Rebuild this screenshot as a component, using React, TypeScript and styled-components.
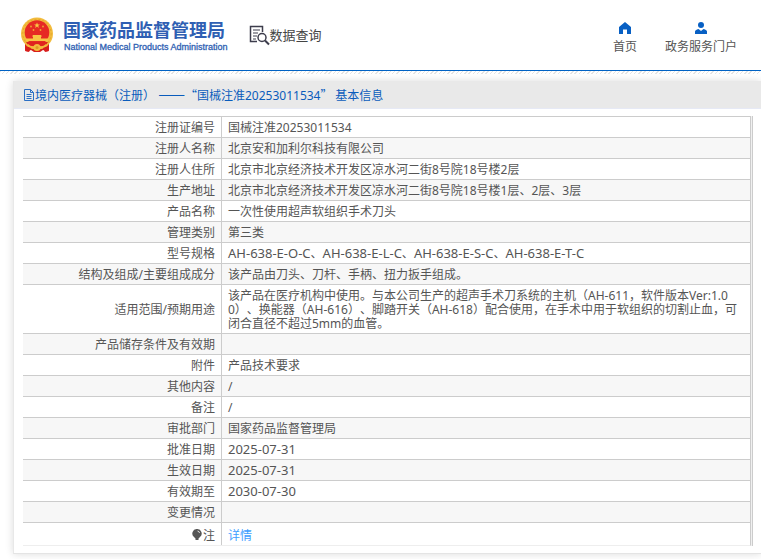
import React from 'react';
import styled, { createGlobalStyle } from 'styled-components';

const GlobalStyle = createGlobalStyle`
  * { box-sizing: border-box; }
  body {
    margin: 0;
    background: #fff;
    color: #555;
    font: 12px/14px "Noto Sans", "Noto Sans CJK SC", sans-serif;
    text-spacing-trim: space-all;
    overflow-x: hidden;
  }
`;

const Header = styled.header`
  display: flex;
  align-items: center;
  height: 71px;
  padding: 0 24px 0 21px;
  border-bottom: 1px solid #0062c4;
`;

const Brand = styled.a`
  display: flex;
  align-items: center;
  gap: 10px;
  color: #2f5fb3;
  text-decoration: none;
`;

const BrandText = styled.span`
  display: flex;
  flex-direction: column;
  gap: 1px;
  white-space: nowrap;
`;

const BrandName = styled.strong`
  font: 700 18px/22px "Noto Sans CJK SC", sans-serif;
`;

const BrandSub = styled.span`
  padding-left: 1px;
  font: 400 9px/12px "Liberation Sans", sans-serif;
  -webkit-text-stroke: 0.3px currentColor;
`;

const Query = styled.h1`
  display: flex;
  align-items: center;
  margin: 0 0 0 21px;
  color: #444;
  font: 400 13px/20px "Noto Sans CJK SC", sans-serif;
`;

const Nav = styled.nav`
  display: flex;
  gap: 28px;
  margin-left: auto;
  padding-top: 5px;
`;

const NavLink = styled.a`
  display: flex;
  flex-direction: column;
  align-items: center;
  gap: 6px;
  color: #555;
  text-decoration: none;
`;

const Hatch = styled.div`
  height: 3px;
  background: repeating-linear-gradient(135deg, #e4e4e4 0 1px, #fff 1px 3px);
`;

const Card = styled.main`
  margin: 7px 0 6px 13px;
  padding-bottom: 7px;
  border-left: 1px solid #e8e8e8;
  border-bottom: 1px solid #e4e4e4;
  box-shadow: 0 0 8px rgba(0, 0, 0, 0.14);
  background: #fff;
`;

const CardTitle = styled.h2`
  display: flex;
  align-items: center;
  height: 28px;
  margin: 0 0 7px;
  padding: 1px 9px 0;
  border-bottom: 1px solid #e6e9f5;
  background: #e9e9e9;
  color: #0a5cbc;
  font-size: 12px;
  font-weight: 400;
  white-space: pre;
`;

const Wide = styled.span`
  font-family: "Noto Sans CJK SC", sans-serif;
`;

const Dash = styled(Wide)`
  font-size: 16px;
  line-height: 12px;
`;

const TableFrame = styled.div`
  margin: 0 8px 0 9px;
  padding-right: 1px;
  border-right: 1px solid #ccc;
  background: #f0f0f0;
`;

const Table = styled.table`
  width: 100%;
  border-collapse: separate;
  border-spacing: 0;
  border-right: 1px solid #ccc;
  border-bottom: 1px solid #eee;
  background: #fff;
`;

const Row = styled.tr`
  &:nth-child(even) { background: #f7f7f7; }
  &:last-child > * { padding: 6px 6px 2px; }
`;

const Label = styled.th`
  width: 199px;
  height: 21px;
  padding: 4px 6px 2px;
  border-top: 1px solid #ccc;
  border-right: 1px solid #ccc;
  font-weight: 400;
  text-align: right;
`;

const Value = styled.td`
  padding: 4px 6px 2px;
  border-top: 1px solid #ccc;
  word-break: break-all;
`;

const Code = styled.span`
  font-size: 13px;
  line-height: 12px;
`;

const DetailLink = styled.a`
  color: #409eff;
  text-decoration: none;
`;

const NoteIcon = styled.svg`
  margin-right: 1px;
  vertical-align: -1px;
`;

const Emblem = () => (
  <svg width="32" height="36" viewBox="0 0 32 36" aria-hidden="true">
    <path d="M4 24h24v9l-2 1.500-4-1.500-3 2h-6l-3-2-4 1.500L4 33z" fill="#d81e1c" />
    <circle cx="16" cy="16.500" r="16" fill="#f3bc3d" />
    <circle cx="16" cy="16.500" r="14.200" fill="none" stroke="#e2a52b" strokeWidth="1" strokeDasharray="2 2" />
    <circle cx="16" cy="15.500" r="12.300" fill="#e62a24" />
    <path d="M16 5.500l.8 2h2.100l-1.700 1.300.7 2.100-1.900-1.300-1.900 1.300.7-2.100-1.700-1.300h2.100z" fill="#f9c944" />
    <g fill="#f0a733">
      <circle cx="10" cy="9.500" r=".9" />
      <circle cx="22" cy="9.500" r=".9" />
      <circle cx="12.500" cy="13" r=".9" />
      <circle cx="19.500" cy="13" r=".9" />
    </g>
    <path d="M12 18h8l1 1.500h-1v2h7V24H5v-2.500h7v-2h-1z" fill="#f7c544" />
    <path d="M5 25h22l-3 4.500H8z" fill="#df241f" />
    <path d="M7 27q4 4 9 1 5 3 9-1l2 2q-4 3-8 3h-6q-4 0-8-3z" fill="#f3bc3d" />
    <path d="M5 29l5 2-2 4-4-1zM27 29l-5 2 2 4 4-1z" fill="#d81e1c" />
    <circle cx="16" cy="30.500" r="3.500" fill="#f3bc3d" />
    <circle cx="16" cy="30.500" r="1.500" fill="#dd9a25" />
  </svg>
);

const QueryIcon = () => (
  <svg width="21" height="21" viewBox="0 0 21 21" fill="none" stroke="#3d3d4c" aria-hidden="true">
    <path d="M8 16.500H1.500V1.500h12V7" strokeWidth="1.500" />
    <path d="M4 5h7M4 8h5M4 11h4M4 14h3" />
    <circle cx="13" cy="12.500" r="4" strokeWidth="1.500" />
    <path d="M16 15.500l4 4" strokeWidth="2" />
  </svg>
);

const HomeIcon = () => (
  <svg width="12" height="12" viewBox="0 0 12 12" fill="#0860c4" aria-hidden="true">
    <path d="M6 0l6 5v7H8V7.500H4V12H0V5z" />
  </svg>
);

const UserIcon = () => (
  <svg width="12" height="12" viewBox="0 0 12 12" fill="#0860c4" aria-hidden="true">
    <circle cx="6" cy="3" r="3" />
    <path d="M0 12V9.500Q0 8 3.500 7L6 9l2.500-2Q12 8 12 9.500V12z" />
  </svg>
);

const DocIcon = () => (
  <svg width="12" height="12" viewBox="0 0 12 12" fill="none" stroke="#2b6fc4" aria-hidden="true">
    <path d="M1.500.5h6l3 3v8h-9zM7.500.5v3h3M3.500 5.500h5M3.500 7.500h5M3.500 9.500h5" />
  </svg>
);

const Bulb = () => (
  <NoteIcon width="10" height="12" viewBox="0 0 10 12" aria-hidden="true">
    <path d="M5 0a4.500 4.500 0 0 1 3 8L6.500 9.500v1.500h-3V9.500L2 8A4.500 4.500 0 0 1 5 0z" fill="#555" />
    <path d="M5.500 2q2 .3 2 2" stroke="#ddd" fill="none" />
  </NoteIcon>
);

const rows: [string, string][] = [
  ['注册证编号', '国械注准20253011534'],
  ['注册人名称', '北京安和加利尔科技有限公司'],
  ['注册人住所', '北京市北京经济技术开发区凉水河二街8号院18号楼2层'],
  ['生产地址', '北京市北京经济技术开发区凉水河二街8号院18号楼1层、2层、3层'],
  ['产品名称', '一次性使用超声软组织手术刀头'],
  ['管理类别', '第三类'],
  ['型号规格', 'AH-638-E-O-C、AH-638-E-L-C、AH-638-E-S-C、AH-638-E-T-C'],
  ['结构及组成/主要组成成分', '该产品由刀头、刀杆、手柄、扭力扳手组成。'],
  ['适用范围/预期用途', '该产品在医疗机构中使用。与本公司生产的超声手术刀系统的主机（AH-611，软件版本Ver:1.00）、换能器（AH-616）、脚踏开关（AH-618）配合使用，在手术中用于软组织的切割止血，可闭合直径不超过5mm的血管。'],
  ['产品储存条件及有效期', ''],
  ['附件', '产品技术要求'],
  ['其他内容', '/'],
  ['备注', '/'],
  ['审批部门', '国家药品监督管理局'],
  ['批准日期', '2025-07-31'],
  ['生效日期', '2025-07-31'],
  ['有效期至', '2030-07-30'],
  ['变更情况', ''],
];

// Full model numbers and dates are set one size larger than the running text.
const withCodes = (text: string) =>
  text
    .split(/([A-Z]+-\d+-[A-Z-]+|\d{4}-\d{2}-\d{2})/)
    .map((part, i) => (i % 2 ? <Code key={i}>{part}</Code> : part));

export default function App() {
  return (
    <>
      <GlobalStyle />
      <Header>
        <Brand href="#">
          <Emblem />
          <BrandText>
            <BrandName>国家药品监督管理局</BrandName>
            <BrandSub>National Medical Products Administration</BrandSub>
          </BrandText>
        </Brand>
        <Query><QueryIcon />数据查询</Query>
        <Nav>
          <NavLink href="#"><HomeIcon />首页</NavLink>
          <NavLink href="#"><UserIcon />政务服务门户</NavLink>
        </Nav>
      </Header>
      <Hatch />
      <Card>
        <CardTitle>
          <DocIcon />
          <span>
            境内医疗器械（注册） <Dash>——</Dash><Wide>“</Wide>国械注准20253011534<Wide>” </Wide>基本信息
          </span>
        </CardTitle>
        <TableFrame>
          <Table>
            <tbody>
              {rows.map(([label, value]) => (
                <Row key={label}>
                  <Label scope="row">{label}</Label>
                  <Value>{withCodes(value)}</Value>
                </Row>
              ))}
              <Row>
                <Label scope="row"><Bulb />注</Label>
                <Value><DetailLink href="#">详情</DetailLink></Value>
              </Row>
            </tbody>
          </Table>
        </TableFrame>
      </Card>
    </>
  );
}
